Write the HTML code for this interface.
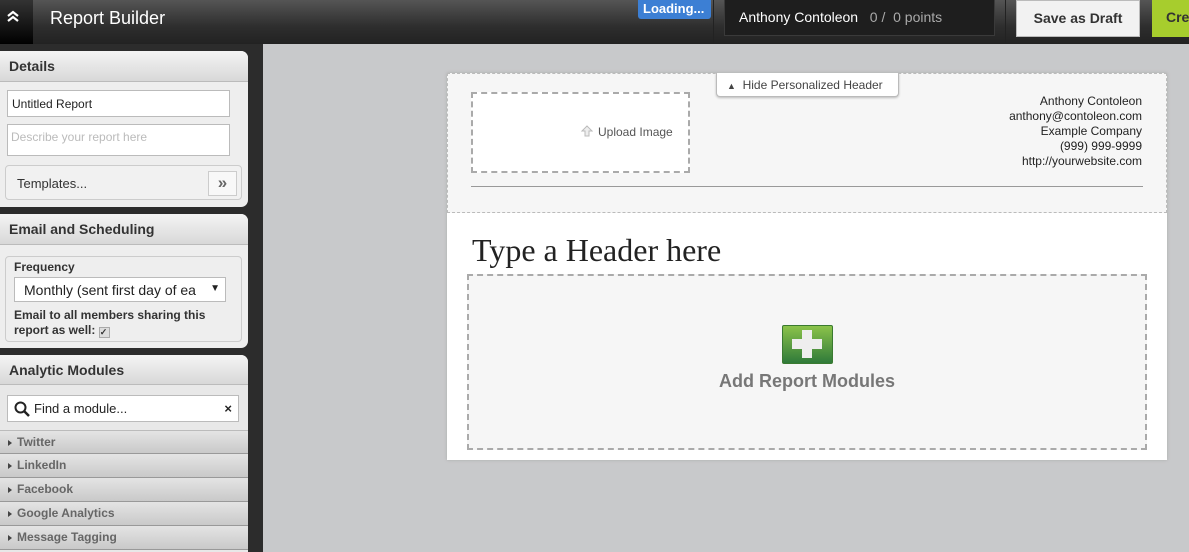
<!DOCTYPE html><html><head><style>
*{box-sizing:border-box;margin:0;padding:0}
body{width:1189px;height:552px;overflow:hidden;font-family:"Liberation Sans",sans-serif;background:#c8c9cb;position:relative}
.a{position:absolute}
#top{left:0;top:0;width:1189px;height:44px;background:linear-gradient(#555,#2e2e2e 60%,#222)}
#side{left:0;top:44px;width:263px;height:508px;background:#2c2c2c}
.pan{position:absolute;left:0;width:248px;background:#eee;border-radius:0 7px 7px 0}
.ph{height:31px;background:linear-gradient(#f4f4f4,#d8d8d8);border-bottom:1px solid #bbb;font-weight:bold;font-size:14px;color:#333;padding:7px 9px;border-radius:0 7px 0 0}
.inp{position:absolute;background:#fff;border:1px solid #bbb;font-size:12px;padding:6px 4px}
.mod{position:absolute;left:0;width:248px;height:24px;background:linear-gradient(#e4e4e4,#c9c9c9);border-bottom:1px solid #999;font-size:12px;font-weight:bold;color:#666;padding:4px 0 0 8px}
.mod:before{content:"";display:inline-block;border-left:4px solid #444;border-top:3px solid transparent;border-bottom:3px solid transparent;margin-right:5px}
</style></head><body>
<div id="top" class="a"></div>
<div class="a" style="left:0;top:0;width:33px;height:44px;background:linear-gradient(#333,#000)"></div>
<svg class="a" style="left:6px;top:10px" width="14" height="14"><path d="M2 6l5-4 5 4M2 11l5-4 5 4" fill="none" stroke="#fff" stroke-width="2.2"/></svg>
<div class="a" style="left:50px;top:8px;color:#fff;font-size:18px">Report Builder</div>
<div class="a" style="left:638px;top:0;width:73px;height:19px;background:#3c7fd4;border-radius:0 0 3px 3px;color:#fff;font-size:13px;font-weight:bold;padding:1px 5px">Loading...</div>
<div class="a" style="left:713px;top:0;width:1px;height:44px;background:#222"></div>
<div class="a" style="left:724px;top:0;width:271px;height:36px;background:#1e1e1e;border:1px solid #3a3a3a;border-top:0;padding:9px 14px;font-size:14px;color:#fff">Anthony Contoleon &nbsp; <span style="color:#aaa">0 / &nbsp;0 points</span></div>
<div class="a" style="left:1005px;top:0;width:1px;height:44px;background:#222"></div>
<div class="a" style="left:1016px;top:0;width:124px;height:37px;background:#f2f2f2;border:1px solid #bbb;font-size:14px;font-weight:bold;color:#333;text-align:center;padding-top:9px">Save as Draft</div>
<div class="a" style="left:1152px;top:0;width:37px;height:37px;background:#a7cd2d;font-size:14px;font-weight:bold;color:#333;padding:9px 0 0 14px">Cre</div>
<div id="side" class="a"></div>
<div class="pan" style="top:51px;height:156px"><div class="ph">Details</div>
<div class="inp" style="left:7px;top:39px;width:223px;height:27px;color:#222">Untitled Report</div>
<div class="inp" style="left:7px;top:73px;width:223px;height:32px;color:#bbb;padding:5px 3px">Describe your report here</div>
<div class="a" style="left:5px;top:114px;width:237px;height:35px;border:1px solid #ccc;border-radius:4px;background:#f1f1f1;font-size:13px;color:#333;padding:10px 11px">Templates...</div>
<div class="a" style="left:208px;top:120px;width:29px;height:25px;border:1px solid #ccc;background:#f8f8f8;font-weight:bold;color:#666;text-align:center;font-size:17px;line-height:21px">&raquo;</div>
</div>
<div class="pan" style="top:214px;height:134px"><div class="ph">Email and Scheduling</div>
<div class="a" style="left:5px;top:42px;width:237px;height:86px;border:1px solid #ccc;border-radius:4px;background:#eee"></div>
<div class="a" style="left:14px;top:46px;font-size:12px;font-weight:bold;color:#333">Frequency</div>
<div class="inp" style="left:14px;top:63px;width:212px;height:25px;font-size:14px;padding:4px 8px 0 9px;color:#222;white-space:nowrap;overflow:hidden">Monthly (sent first day of ea<span class="a" style="right:5px;top:5px;font-size:10px;background:#fff;padding-left:6px">&#9660;</span></div>
<div class="a" style="left:14px;top:94px;font-size:12px;font-weight:bold;color:#333;line-height:15px">Email to all members sharing this<br>report as well: <span style="display:inline-block;width:11px;height:11px;border:1px solid #aaa;background:#ddd;font-size:9px;line-height:9px;vertical-align:-1px">&#10003;</span></div>
</div>
<div class="pan" style="top:355px;height:197px;border-radius:0 7px 0 0;background:#e8e8e8"><div class="ph" style="height:30px">Analytic Modules</div>
<div class="inp" style="left:7px;top:40px;width:232px;height:27px;font-size:13px;padding:5px 26px;color:#222">Find a module...<span class="a" style="right:6px;top:5px;font-weight:bold">&times;</span></div>
<svg class="a" style="left:14px;top:46px" width="16" height="16"><circle cx="6.5" cy="6.5" r="5" fill="none" stroke="#222" stroke-width="2"/><path d="M10 10l5 5" stroke="#222" stroke-width="2.5"/></svg>
</div>
<div class="mod" style="top:430px;border-top:1px solid #bbb">Twitter</div>
<div class="mod" style="top:454px">LinkedIn</div>
<div class="mod" style="top:478px">Facebook</div>
<div class="mod" style="top:502px">Google Analytics</div>
<div class="mod" style="top:526px">Message Tagging</div>
<div class="a" style="left:447px;top:73px;width:720px;height:387px;background:#fff;box-shadow:0 0 3px #aaa"></div>
<div class="a" style="left:447px;top:73px;width:720px;height:140px;background:#f6f6f6;border:1px dashed #bbb"></div>
<div class="a" style="left:716px;top:73px;width:183px;height:24px;background:#fff;border:1px solid #bbb;border-top:0;border-radius:0 0 4px 4px;box-shadow:0 1px 2px #bbb;font-size:12px;color:#444;padding:5px 0 0 10px"><span style="font-size:9px">&#9650;</span>&nbsp; Hide Personalized Header</div>
<div class="a" style="left:471px;top:92px;width:219px;height:81px;background:#fff;border:2px dashed #aaa;font-size:12px;color:#555;padding:31px 0 0 125px">Upload Image</div>
<svg class="a" style="left:581px;top:125px" width="12" height="12"><path d="M6 1l5 5h-3v5h-4v-5h-3z" fill="#eee" stroke="#bbb"/></svg>
<div class="a" style="left:960px;top:94px;width:182px;text-align:right;font-size:12px;line-height:15px;color:#222">Anthony Contoleon<br>anthony@contoleon.com<br>Example Company<br>(999) 999-9999<br>http://yourwebsite.com</div>
<div class="a" style="left:471px;top:186px;width:672px;height:1px;background:#999"></div>
<div class="a" style="left:472px;top:232px;font-family:'Liberation Serif',serif;font-size:32px;color:#222">Type a Header here</div>
<div class="a" style="left:467px;top:274px;width:680px;height:176px;background:#f6f6f6;border:2px dashed #aaa"></div>
<div class="a" style="left:782px;top:325px;width:51px;height:39px;border-radius:2px;background:linear-gradient(#8bc34a,#2f7a3a);border:1px solid #3a7a30"></div>
<svg class="a" style="left:792px;top:330px" width="30" height="28"><path d="M10 0h10v9h10v10h-10v9h-10v-9h-10v-10h10z" fill="#eee"/></svg>
<div class="a" style="left:467px;top:371px;width:680px;text-align:center;font-size:18px;font-weight:bold;color:#777">Add Report Modules</div>
</body></html>
